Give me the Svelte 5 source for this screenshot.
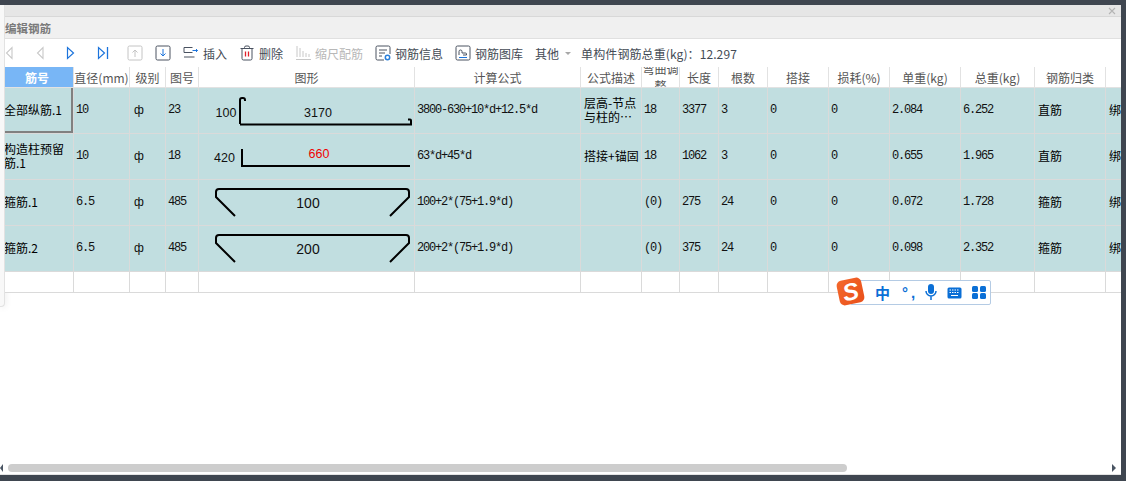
<script lang="ts">
  const columns = [
    { label: '筋号', width: 73 },
    { label: '直径(mm)', width: 56 },
    { label: '级别', width: 36 },
    { label: '图号', width: 33 },
    { label: '图形', width: 216 },
    { label: '计算公式', width: 166 },
    { label: '公式描述', width: 61 },
    { label: '弯曲调整', width: 38 },
    { label: '长度', width: 39 },
    { label: '根数', width: 49 },
    { label: '搭接', width: 61 },
    { label: '损耗(%)', width: 61 },
    { label: '单重(kg)', width: 71 },
    { label: '总重(kg)', width: 74 },
    { label: '钢筋归类', width: 71 },
    { label: '', width: 60 }
  ];

  const rows = [
    { name: '全部纵筋.1', dia: '10', no: '23', top: 88, shape: 'hook', formula: '3800-630+10*d+12.5*d', desc: '层高-节点\n与柱的…', bend: '18', len: '3377', count: '3', unit: '2.084', total: '6.252', kind: '直筋' },
    { name: '构造柱预留筋.1', dia: '10', no: '18', top: 134, shape: 'angle', formula: '63*d+45*d', desc: '搭接+锚固', bend: '18', len: '1062', count: '3', unit: '0.655', total: '1.965', kind: '直筋' },
    { name: '箍筋.1', dia: '6.5', no: '485', top: 180, shape: 'stirrup', size: '100', formula: '100+2*(75+1.9*d)', desc: '', bend: '(0)', len: '275', count: '24', unit: '0.072', total: '1.728', kind: '箍筋' },
    { name: '箍筋.2', dia: '6.5', no: '485', top: 226, shape: 'stirrup', size: '200', formula: '200+2*(75+1.9*d)', desc: '', bend: '(0)', len: '375', count: '24', unit: '0.098', total: '2.352', kind: '箍筋' }
  ];
</script>

<div class="screen">
  <div class="window">
    <div class="upper">
      <div class="side-edge"></div>
      <div class="main">
        <div class="topbar">
          <svg width="8" height="8" viewBox="0 0 8 8"><path d="M1 1l6 6M7 1l-6 6" stroke="#b4b4b4" stroke-width="1.1" fill="none" /></svg>
        </div>
        <div class="titlebar">编辑钢筋</div>

        <div class="toolbar">
          <div class="nav">
            <svg class="ico" viewBox="0 0 16 16"><path d="M11 2.5v11L5.5 8z" fill="none" stroke="#c8c8c8" stroke-width="1.1" /></svg>
            <svg class="ico" viewBox="0 0 16 16"><path d="M11 2.5v11L5.5 8z" fill="none" stroke="#c8c8c8" stroke-width="1.1" /></svg>
            <svg class="ico" viewBox="0 0 16 16"><path d="M4.5 2.5v11L10.5 8z" fill="none" stroke="#1c74dc" stroke-width="1.2" /></svg>
            <svg class="ico" viewBox="0 0 16 16"><path d="M4.5 2.5v11L10.5 8z" fill="none" stroke="#1c74dc" stroke-width="1.2" /><path d="M13.5 2v12" stroke="#1c74dc" stroke-width="1.3" /></svg>
          </div>
          <div class="moves">
            <svg class="ico" viewBox="0 0 16 16"><rect x="1" y="1" width="14" height="14" rx="1.5" fill="none" stroke="#c4c4c4" /><path d="M8 12V5M5.5 7.5L8 5l2.5 2.5" fill="none" stroke="#c4c4c4" /></svg>
            <svg class="ico" viewBox="0 0 16 16"><rect x="1" y="1" width="14" height="14" rx="1.5" fill="none" stroke="#4a5260" /><path d="M8 4v7M5.5 8.5L8 11l2.5-2.5" fill="none" stroke="#1c74dc" /></svg>
          </div>
          <div class="tool">
            <svg class="ico" viewBox="0 0 16 16"><path d="M9.500 2.500H1v5h8.500M1 12h10.500" fill="none" stroke="#4a5260" /><path d="M9.500 5.500h5M13 4l1.500 1.500L13 7" fill="none" stroke="#1c74dc" /></svg>
            <span>插入</span>
          </div>
          <div class="tool">
            <svg class="ico" viewBox="0 0 16 16"><path d="M1.500 3.500h13M5.500 3.500V2.500a1.500 1.500 0 0 1 1.500-1.500h2a1.500 1.500 0 0 1 1.500 1.500v1M3 3.500v10a1.500 1.500 0 0 0 1.500 1.500h7a1.500 1.500 0 0 0 1.500-1.500v-10" fill="none" stroke="#4a5260" /><path d="M6.500 6.500v5M9.500 6.500v5" stroke="#e0202a" stroke-width="1.3" /></svg>
            <span>删除</span>
          </div>
          <div class="tool off">
            <svg class="ico" viewBox="0 0 16 16"><path d="M2 1v11M5 3v9M8 6v6M11 8v4M14 9v3M1 14.500h15" fill="none" stroke="#c8c8c8" /></svg>
            <span>缩尺配筋</span>
          </div>
          <div class="tool">
            <svg class="ico" viewBox="0 0 16 16"><path d="M9 15H2.500a1.500 1.500 0 0 1-1.500-1.500V2.500A1.500 1.500 0 0 1 2.500 1h11A1.500 1.500 0 0 1 15 2.500V9" fill="none" stroke="#4a5260" /><path d="M4 5h8M4 8h6M4 11h3" stroke="#4a5260" /><circle cx="12.500" cy="12.500" r="2.200" fill="none" stroke="#2a80dc" stroke-width="1.500" /></svg>
            <span>钢筋信息</span>
          </div>
          <div class="tool">
            <svg class="ico" viewBox="0 0 16 16"><rect x="1" y="1" width="14" height="14" rx="1.500" fill="none" stroke="#4a5260" /><path d="M4 10V6.500a1.500 1.500 0 0 1 3 0V8h3.500a1 1 0 0 1 1 1v1H8" fill="none" stroke="#4a5260" /><path d="M4 12.500h8" stroke="#1c74dc" /></svg>
            <span>钢筋图库</span>
          </div>
          <div class="tool other">
            <span>其他</span>
            <i class="caret"></i>
          </div>
          <span class="weight">单构件钢筋总重(kg)：12.297</span>
        </div>

        <div class="grid-wrap">
          <table>
            <colgroup>
              {#each columns as col}
                <col style="width: {col.width}px" />
              {/each}
            </colgroup>
            <thead>
              <tr>
                {#each columns as col, i}
                  <th class:active={i === 0}><div class="head-cell">{col.label}</div></th>
                {/each}
              </tr>
            </thead>
            <tbody>
              {#each rows as row, r}
                <tr class="data">
                  <td class="cjk" class:selected={r === 0}><div class="cell">{row.name}</div></td>
                  <td><div class="cell">{row.dia}</div></td>
                  <td class="grade"><div class="cell">ф</div></td>
                  <td><div class="cell">{row.no}</div></td>
                  <td class="shape">
                    <svg width="215" height="45" viewBox="199 {row.top} 215 45">
                      {#if row.shape === 'hook'}
                        <path d="M240 124V100q0-2 2-2h1q2 0 2 2v1M240 124.500H411v-4q0-1-1-1h-2" />
                        <text x="226" y="117" class="dim">100</text>
                        <text x="318" y="117" class="dim">3170</text>
                      {:else if row.shape === 'angle'}
                        <path d="M242 149v17H410" />
                        <text x="224.500" y="162" class="dim">420</text>
                        <text x="319" y="158" class="dim red">660</text>
                      {:else}
                        <path d="M235 {row.top + 36}L216 {row.top + 17}V{row.top + 12}q0-3 3-3H406q3 0 3 3V{row.top + 17}L390 {row.top + 36}" />
                        <text x="308" y={row.top + 28} class="dim big">{row.size}</text>
                      {/if}
                    </svg>
                  </td>
                  <td><div class="cell">{row.formula}</div></td>
                  <td class="cjk"><div class="cell desc">{row.desc}</div></td>
                  <td><div class="cell">{row.bend}</div></td>
                  <td><div class="cell">{row.len}</div></td>
                  <td><div class="cell">{row.count}</div></td>
                  <td><div class="cell">0</div></td>
                  <td><div class="cell">0</div></td>
                  <td><div class="cell">{row.unit}</div></td>
                  <td><div class="cell">{row.total}</div></td>
                  <td class="cjk"><div class="cell">{row.kind}</div></td>
                  <td class="cjk"><div class="cell nowrap">绑扎</div></td>
                </tr>
              {/each}
              <tr class="blank">
                {#each columns as col}
                  <td></td>
                {/each}
              </tr>
            </tbody>
          </table>
        </div>
      </div>
    </div>

    <div class="hscroll">
      <i class="arrow left"></i>
      <div class="thumb"></div>
      <i class="arrow right"></i>
    </div>
  </div>

  <div class="ime">
    <div class="ime-logo"><span>S</span></div>
    <div class="ime-bar">
      <span class="ime-zh">中</span>
      <span class="ime-punc">°,</span>
      <svg width="12" height="17" viewBox="0 0 12 17"><rect x="3" y="0" width="6" height="10" rx="3" fill="#0a6fd6" /><path d="M1 7a5 5 0 0 0 10 0M6 12v4" fill="none" stroke="#0a6fd6" stroke-width="1.5" /></svg>
      <svg width="15" height="12" viewBox="0 0 15 12"><rect x=".5" y=".5" width="14" height="11" rx="1.500" fill="#0a6fd6" /><path d="M2.500 3h10M2.500 5.500h10" stroke="#fff" stroke-dasharray="1.500 1" /><path d="M4 8.500h7" stroke="#fff" /></svg>
      <svg width="14" height="13" viewBox="0 0 14 13"><rect width="6" height="6" rx="1.500" fill="#0a6fd6" /><rect x="8" width="6" height="6" rx="1.500" fill="#0a6fd6" /><rect y="7" width="6" height="6" rx="1.500" fill="#0a6fd6" /><rect x="8" y="7" width="6" height="6" rx="1.500" fill="#0a6fd6" /></svg>
    </div>
  </div>
</div>

<style>
  :global(body) {
    margin: 0;
    background: #3f4650;
  }

  .screen {
    position: relative;
    width: 1126px;
    height: 481px;
    box-sizing: border-box;
    padding: 5px 5px 6px 0;
    overflow: hidden;
    background: #3f4650;
    font-family: "Noto Sans CJK SC", "Liberation Sans", sans-serif;
  }

  .window {
    height: 100%;
    display: flex;
    flex-direction: column;
    background: #fff;
    border-bottom: 1px solid #e4e4e4;
    box-sizing: border-box;
    overflow: hidden;
  }

  .upper {
    flex: 1;
    min-height: 0;
    display: flex;
    align-items: flex-start;
  }

  .side-edge {
    flex: none;
    width: 4px;
    height: 301px;
    background: #f8f8f8;
    border-right: 1px solid #e2e2e2;
    border-bottom: 1px solid #e2e2e2;
    border-bottom-right-radius: 4px;
    box-shadow: 1px 1px 6px rgba(0, 0, 0, 0.08);
  }

  .main {
    flex: 1;
    min-width: 0;
    height: 100%;
    display: flex;
    flex-direction: column;
  }

  .topbar {
    height: 11px;
    flex: none;
    display: flex;
    align-items: center;
    justify-content: flex-end;
    padding-right: 5px;
    background: #e6e6e6;
    border-bottom: 1px solid #d8d8d8;
  }

  .titlebar {
    height: 21px;
    flex: none;
    line-height: 22px;
    font-size: 11.500px;
    font-weight: 700;
    color: #7a7a7a;
    background: #f0f0f0;
    border-bottom: 1px solid #e0e0e0;
  }

  .toolbar {
    height: 28px;
    flex: none;
    display: flex;
    align-items: center;
    gap: 12px;
    background: #fff;
    font-size: 12px;
    color: #444b55;
    white-space: nowrap;
  }

  .ico {
    width: 16px;
    height: 16px;
    flex: none;
    display: block;
  }

  .nav {
    display: flex;
    gap: 15px;
    margin-left: -4px;
    margin-right: 5px;
  }

  .moves {
    display: flex;
    gap: 12px;
  }

  .tool {
    display: flex;
    align-items: center;
    gap: 4px;
  }

  .tool.off {
    color: #b8b8b8;
  }

  .other {
    gap: 6px;
  }

  .caret {
    width: 0;
    height: 0;
    border-left: 3px solid transparent;
    border-right: 3px solid transparent;
    border-top: 3px solid #a8a8a8;
  }

  .weight {
    margin-left: -2px;
    letter-spacing: 0.1px;
  }

  .grid-wrap {
    flex: 1;
    min-height: 0;
    overflow: hidden;
  }

  table {
    table-layout: fixed;
    width: 1117px;
    margin-left: -4px;
    border-collapse: separate;
    border-spacing: 0;
  }

  th,
  td {
    padding: 0;
    border-right: 1px solid #dadada;
    border-bottom: 1px solid #dadada;
    overflow: hidden;
  }

  th {
    height: 20px;
    background: #fff;
    border-color: #e2e2e2;
    font-size: 12px;
    font-weight: 400;
    color: #555;
  }

  th.active {
    background: #78b6f6;
    color: #fff;
    font-weight: 700;
  }

  .head-cell {
    height: 20px;
    display: flex;
    flex-wrap: wrap;
    align-items: center;
    align-content: center;
    justify-content: center;
    overflow: hidden;
    line-height: 17px;
    text-align: center;
  }

  .data td {
    height: 45px;
    background: #c1dee0;
    font-family: "Liberation Mono", monospace;
    font-size: 12px;
    letter-spacing: -1.200px;
    color: #111;
  }

  .data td.selected {
    box-shadow: inset -2px -2px 0 #808080;
  }

  .data td.cjk {
    font-family: "Noto Sans CJK SC", sans-serif;
    font-size: 12px;
    letter-spacing: 0;
    color: #000;
  }

  .data td.grade {
    font-family: "Liberation Sans", sans-serif;
    font-size: 12px;
    letter-spacing: 0;
    padding-left: 2px;
  }

  .cell {
    padding: 0 1px 2px 2px;
    line-height: 14px;
    word-break: break-all;
  }

  .cjk .cell {
    padding-left: 3px;
  }

  .desc {
    white-space: pre-line;
  }

  .nowrap {
    white-space: nowrap;
  }

  td.shape svg {
    display: block;
  }

  td.shape path {
    fill: none;
    stroke: #000;
    stroke-width: 2;
  }

  .dim {
    font-family: "Liberation Sans", sans-serif;
    font-size: 12.500px;
    letter-spacing: 0;
    text-anchor: middle;
    fill: #111;
  }

  .dim.red {
    fill: #f00000;
  }

  .dim.big {
    font-size: 14px;
  }

  .blank td {
    height: 20px;
    background: #fff;
  }

  .hscroll {
    flex: none;
    height: 8px;
    margin-bottom: 2px;
    display: flex;
    align-items: center;
  }

  .thumb {
    width: 839px;
    height: 8px;
    margin-left: 5px;
    border-radius: 4px;
    background: #cdcdcd;
  }

  .arrow {
    width: 0;
    height: 0;
    border-top: 4px solid transparent;
    border-bottom: 4px solid transparent;
  }

  .arrow.left {
    border-right: 3px solid #4a5563;
  }

  .arrow.right {
    margin-left: auto;
    margin-right: 5px;
    border-left: 4px solid #4a5563;
  }

  /* input method bar floats over the page */
  .ime {
    position: absolute;
    left: 838px;
    top: 275px;
    display: flex;
    align-items: center;
  }

  .ime-logo {
    position: relative;
    z-index: 1;
    width: 25px;
    height: 25px;
    display: flex;
    align-items: center;
    justify-content: center;
    border-radius: 5px;
    background: linear-gradient(135deg, #f4682c, #e9501a);
    transform: rotate(-12deg);
    margin-top: 2px;
  }

  .ime-logo span {
    font-family: "Liberation Sans", sans-serif;
    font-size: 24px;
    font-weight: 700;
    font-style: italic;
    line-height: 1;
    color: #fff;
  }

  .ime-bar {
    height: 23px;
    margin-left: -13px;
    margin-top: 5px;
    padding: 0 4px 0 24px;
    display: flex;
    align-items: center;
    gap: 10px;
    background: #fff;
    border: 1px solid #b4cbe4;
    border-radius: 2px;
    color: #0a6fd6;
  }

  .ime-zh {
    font-size: 15px;
    font-weight: 700;
    line-height: 1;
  }

  .ime-punc {
    width: 14px;
    margin: 0 -1px 0 2px;
    font-family: "Liberation Sans", sans-serif;
    font-size: 15px;
    font-weight: 700;
    line-height: 1;
    letter-spacing: 3px;
  }
</style>
